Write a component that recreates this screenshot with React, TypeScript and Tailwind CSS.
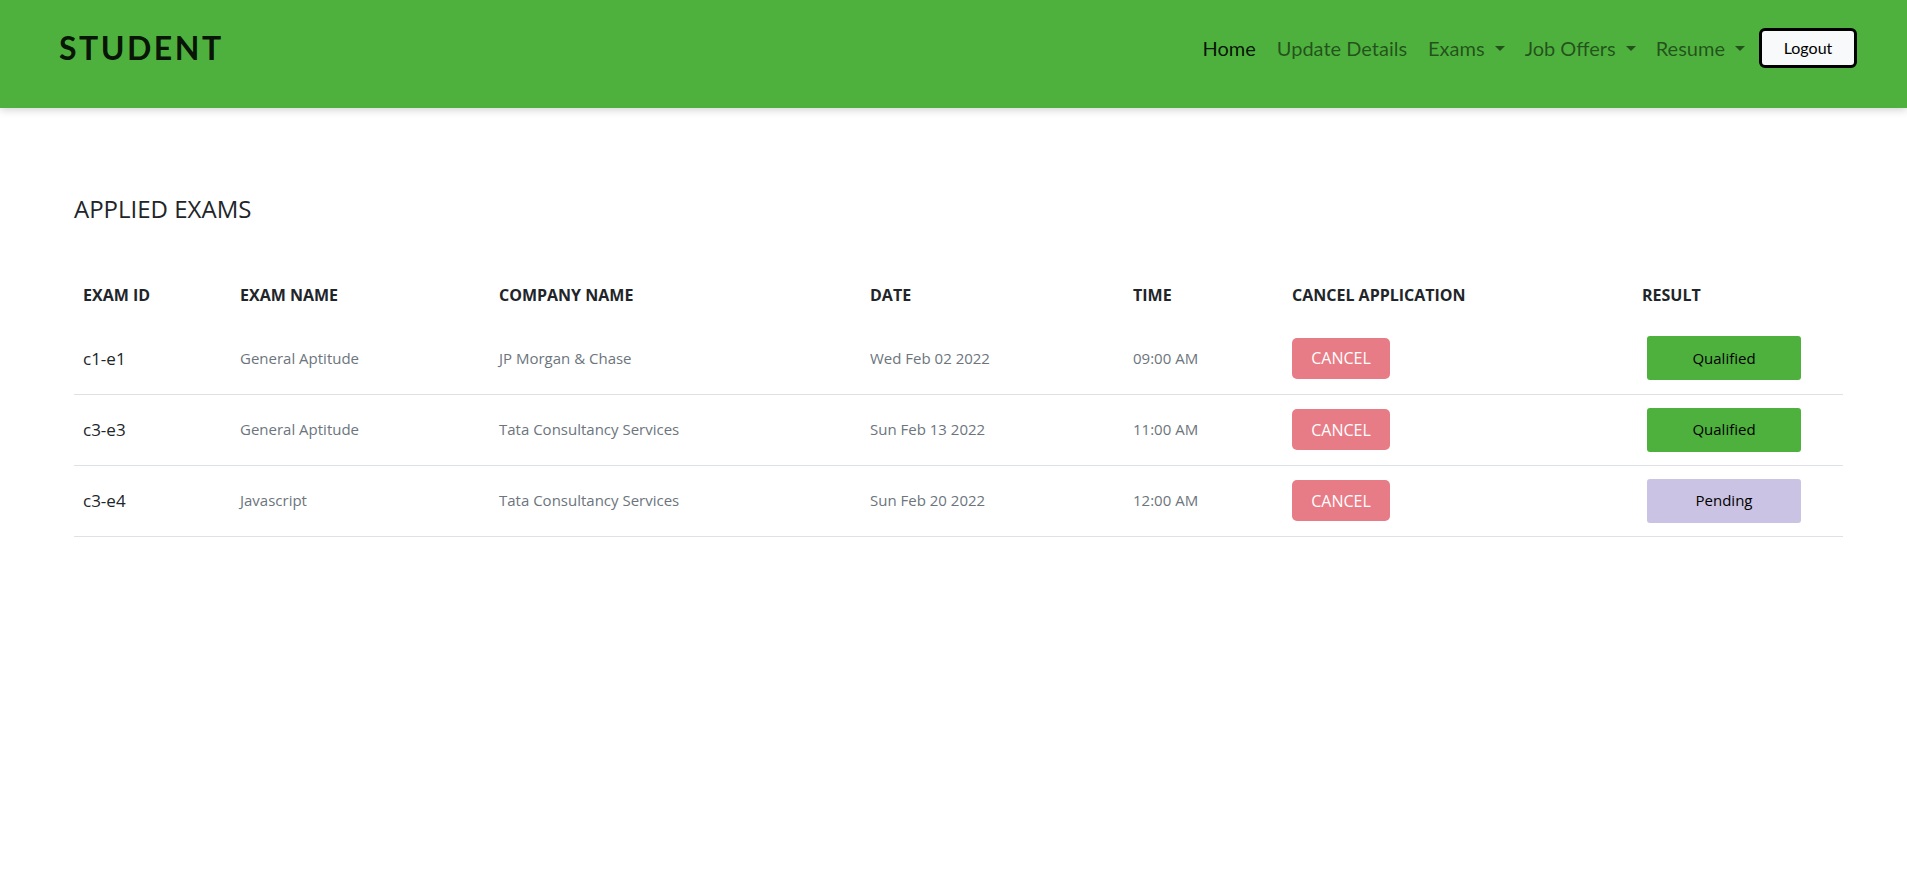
import React from "react";

const exams = [
    { id: "c1-e1", name: "General Aptitude", company: "JP Morgan & Chase", date: "Wed Feb 02 2022", time: "09:00 AM", result: "Qualified" },
    { id: "c3-e3", name: "General Aptitude", company: "Tata Consultancy Services", date: "Sun Feb 13 2022", time: "11:00 AM", result: "Qualified" },
    { id: "c3-e4", name: "Javascript", company: "Tata Consultancy Services", date: "Sun Feb 20 2022", time: "12:00 AM", result: "Pending" },
];

const Caret = () => (
    <span className="ml-[10px] inline-block h-0 w-0 border-x-[5px] border-t-[5px] border-x-transparent border-t-current align-middle" />
);

const Navbar = () => {
    return (
        <nav className="relative z-10 flex h-[108px] items-center justify-between bg-[#4eb13d] pb-[12px] pl-[59px] pr-[50px] shadow-[0_2px_8px_rgba(0,0,0,0.18)] font-['Lato',sans-serif]">
            <span className="text-[32px] font-bold tracking-[2.5px] text-black/90">STUDENT</span>
            <div className="flex items-center text-[20px]">
                <a href="#" className="text-black/90">Home</a>
                <a href="#" className="ml-[21px] text-black/55">Update Details</a>
                <a href="#" className="ml-[21px] flex items-center text-black/55">Exams<Caret /></a>
                <a href="#" className="ml-[20px] flex items-center text-black/55">Job Offers<Caret /></a>
                <a href="#" className="ml-[20px] flex items-center text-black/55">Resume<Caret /></a>
                <button className="ml-[14px] h-[40px] w-[98px] rounded-md border-[3px] border-black bg-[#f8f9fa] text-[16px] text-black">
                    Logout
                </button>
            </div>
        </nav>
    );
};

const AppliedExams = () => {
    return (
        <section className="pl-[74px] pr-[64px] pt-[86px] font-['Open_Sans',sans-serif] text-[#212529]">
            <h4 className="text-[24px] font-medium leading-[29px]">APPLIED EXAMS</h4>
            <table className="mt-[44px] w-full table-fixed border-collapse">
                <colgroup>
                    <col className="w-[158px]" />
                    <col className="w-[259px]" />
                    <col className="w-[371px]" />
                    <col className="w-[263px]" />
                    <col className="w-[159px]" />
                    <col className="w-[350px]" />
                    <col className="w-[209px]" />
                </colgroup>
                <thead>
                    <tr className="h-[56px] text-left text-[16px] font-bold">
                        <th className="pl-[9px] align-middle">EXAM ID</th>
                        <th className="pl-2 align-middle">EXAM NAME</th>
                        <th className="pl-2 align-middle">COMPANY NAME</th>
                        <th className="pl-2 align-middle">DATE</th>
                        <th className="pl-2 align-middle">TIME</th>
                        <th className="pl-2 align-middle">CANCEL APPLICATION</th>
                        <th className="pl-2 align-middle">RESULT</th>
                    </tr>
                </thead>
                <tbody>
                    {exams.map((e) => (
                        <tr key={e.id} className="h-[71px] border-b border-[#dee2e6] text-[15px] text-[#6c757d]">
                            <td className="pl-[9px] align-middle text-[17px] font-medium text-[#212529]">{e.id}</td>
                            <td className="pl-2 align-middle">{e.name}</td>
                            <td className="pl-2 align-middle">{e.company}</td>
                            <td className="pl-2 align-middle">{e.date}</td>
                            <td className="pl-2 align-middle">{e.time}</td>
                            <td className="pl-2 align-middle">
                                <button className="h-[41px] w-[98px] rounded-[5px] bg-[#e87c86] text-[16px] text-white">
                                    CANCEL
                                </button>
                            </td>
                            <td className="pl-[13px] align-middle">
                                <div
                                    className={
                                        e.result === "Qualified"
                                            ? "flex h-[44px] w-[154px] items-center justify-center rounded-[3px] bg-[#4eb13d] text-[15px] text-black"
                                            : "flex h-[44px] w-[154px] items-center justify-center rounded-[3px] bg-[#cbc3e3] text-[15px] text-black"
                                    }
                                >
                                    {e.result}
                                </div>
                            </td>
                        </tr>
                    ))}
                </tbody>
            </table>
        </section>
    );
};

export default function App() {
    return (
        <div className="min-h-screen bg-white">
            <Navbar />
            <AppliedExams />
        </div>
    );
}
